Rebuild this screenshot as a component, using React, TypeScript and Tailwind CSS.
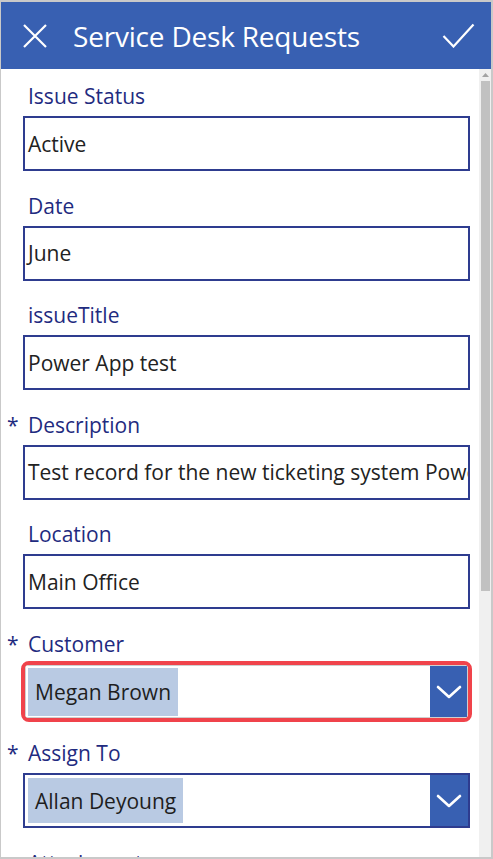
import React from "react";

const font = { fontFamily: '"Open Sans", "Noto Sans", sans-serif' };

function Label({ text, required }: { text: string; required?: boolean }) {
  return (
    <div className="relative h-[28px] leading-[28px] pl-[27px] text-[21px] text-[#1f2b80] whitespace-nowrap">
      {required && (
        <span className="absolute left-[6px] top-0 text-[21px] text-[#1f2b80]">*</span>
      )}
      {text}
    </div>
  );
}

function TextField({ label, value, required }: { label: string; value: string; required?: boolean }) {
  return (
    <div className="h-[109.5px] pt-[13px]">
      <Label text={label} required={required} />
      <div className="mt-[6px] ml-[22px] mr-[9px] h-[55px] border-2 border-[#2e3c8f] flex items-center pl-[3px] pt-[2px] overflow-hidden">
        <span className="whitespace-nowrap text-[21px] text-[#222222]">{value}</span>
      </div>
    </div>
  );
}

function Chevron() {
  return (
    <svg width="26" height="14" viewBox="0 0 26 14" fill="none">
      <polyline points="2,2 13,12 24,2" stroke="white" strokeWidth="2.6" strokeLinecap="round" strokeLinejoin="round" />
    </svg>
  );
}

function Highlight({ value }: { value: string }) {
  return (
    <div className="h-full flex items-center bg-[#b9cae3] px-[7px] pt-[2px] text-[21px] text-[#1e1e1e] whitespace-nowrap">
      {value}
    </div>
  );
}

function DropField({ label, value }: { label: string; value: string }) {
  return (
    <div className="h-[109.5px] pt-[13px]">
      <Label text={label} required />
      <div className="mt-[6px] ml-[22px] mr-[9px] h-[55px] border-2 border-[#2e3c8f] flex items-stretch">
        <div className="flex-1 flex items-center pl-[3px] py-[3px]">
          <Highlight value={value} />
        </div>
        <div className="w-[38px] bg-[#3860b2] flex items-center justify-center">
          <Chevron />
        </div>
      </div>
    </div>
  );
}

function FocusedDropField({ label, value }: { label: string; value: string }) {
  return (
    <div className="h-[109.5px] pt-[13px]">
      <Label text={label} required />
      <div className="mt-[3.5px] ml-[20px] mr-[7px] h-[61px] border-[4px] border-[#f0434b] rounded-[8px] overflow-hidden">
        <div className="h-full border border-[#cfcfcf] flex items-stretch">
          <div className="flex-1 flex items-center pl-[2px] pt-[2px] pb-[1px]">
            <Highlight value={value} />
          </div>
          <div className="w-[37px] bg-[#3860b2] flex items-center justify-center">
            <Chevron />
          </div>
        </div>
      </div>
    </div>
  );
}

export default function App() {
  return (
    <div
      style={font}
      className="w-[493px] h-[859px] bg-white border-l border-t-2 border-r-2 border-b-2 border-[#c9c9c9] flex flex-col overflow-hidden"
    >
      <div className="h-[67px] shrink-0 bg-[#3860b2] flex items-center text-white">
        <svg className="ml-[21px]" width="26" height="24" viewBox="0 0 26 24" fill="none">
          <path d="M2 1 L24 23 M24 1 L2 23" stroke="white" strokeWidth="2.2" />
        </svg>
        <div className="ml-[25px] text-[28px] leading-none tracking-[-0.2px] whitespace-nowrap">Service Desk Requests</div>
        <svg className="ml-auto mr-[16px]" width="33" height="25" viewBox="0 0 33 25" fill="none">
          <path d="M1.5 13 L11.5 23.5 L31.5 1.5" stroke="white" strokeWidth="2.2" />
        </svg>
      </div>
      <div className="flex flex-1 min-h-0">
        <div className="flex-1 min-w-0 overflow-hidden">
          <TextField label="Issue Status" value="Active" />
          <TextField label="Date" value="June" />
          <TextField label="issueTitle" value="Power App test" />
          <TextField label="Description" value="Test record for the new ticketing system Power Apps" required />
          <TextField label="Location" value="Main Office" />
          <FocusedDropField label="Customer" value="Megan Brown" />
          <DropField label="Assign To" value="Allan Deyoung" />
          <div className="h-[109.5px] pt-[13px]">
            <Label text="Attachments" />
          </div>
        </div>
        <div className="w-[12px] shrink-0 bg-[#f0f0f0] flex flex-col items-center">
          <div className="h-[12px] w-full flex items-center justify-center">
            <svg width="7" height="4" viewBox="0 0 7 4">
              <polygon points="0,4 3.5,0 7,4" fill="#a3a3a3" />
            </svg>
          </div>
          <div className="w-[9px] h-[510px] bg-[#c1c1c1]" />
        </div>
      </div>
    </div>
  );
}
